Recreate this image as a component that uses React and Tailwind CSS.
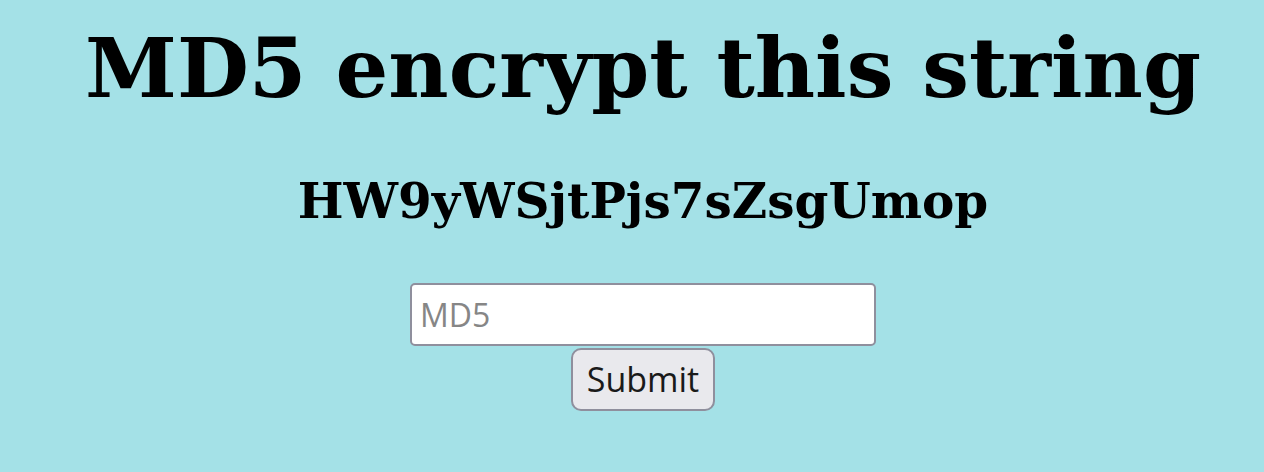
export default function App() {
    return (
        <div className="min-h-screen bg-[#a4e1e7] pl-[22px] text-center text-black">
            {/* Title */}
            <h1 className="pt-[20px] font-['DejaVu_Serif',serif] text-[83px] leading-[97px] font-bold">
                MD5 encrypt this string
            </h1>
            <h3 className="mt-[56px] font-['DejaVu_Serif',serif] text-[48.5px] leading-[56px] font-bold">
                HW9yWSjtPjs7sZsgUmop
            </h3>

            {/* Form */}
            <form className="mt-[54px] flex flex-col items-center" onSubmit={(e) => e.preventDefault()}>
                <input
                    type="text"
                    placeholder="MD5"
                    className="h-[63px] w-[466px] rounded-[5px] border-[2.5px] border-[#8f8f9d] bg-white px-[8px] font-['Open_Sans',sans-serif] text-[32px] placeholder:text-[#868686]"
                />
                <button
                    type="submit"
                    className="mt-[2px] h-[63px] w-[144px] rounded-[10px] border-[2.5px] border-[#8f8f9d] bg-[#e9e9ed] font-['Open_Sans',sans-serif] text-[34px] text-[#1a1a1a]"
                >
                    Submit
                </button>
            </form>
        </div>
    )
}
